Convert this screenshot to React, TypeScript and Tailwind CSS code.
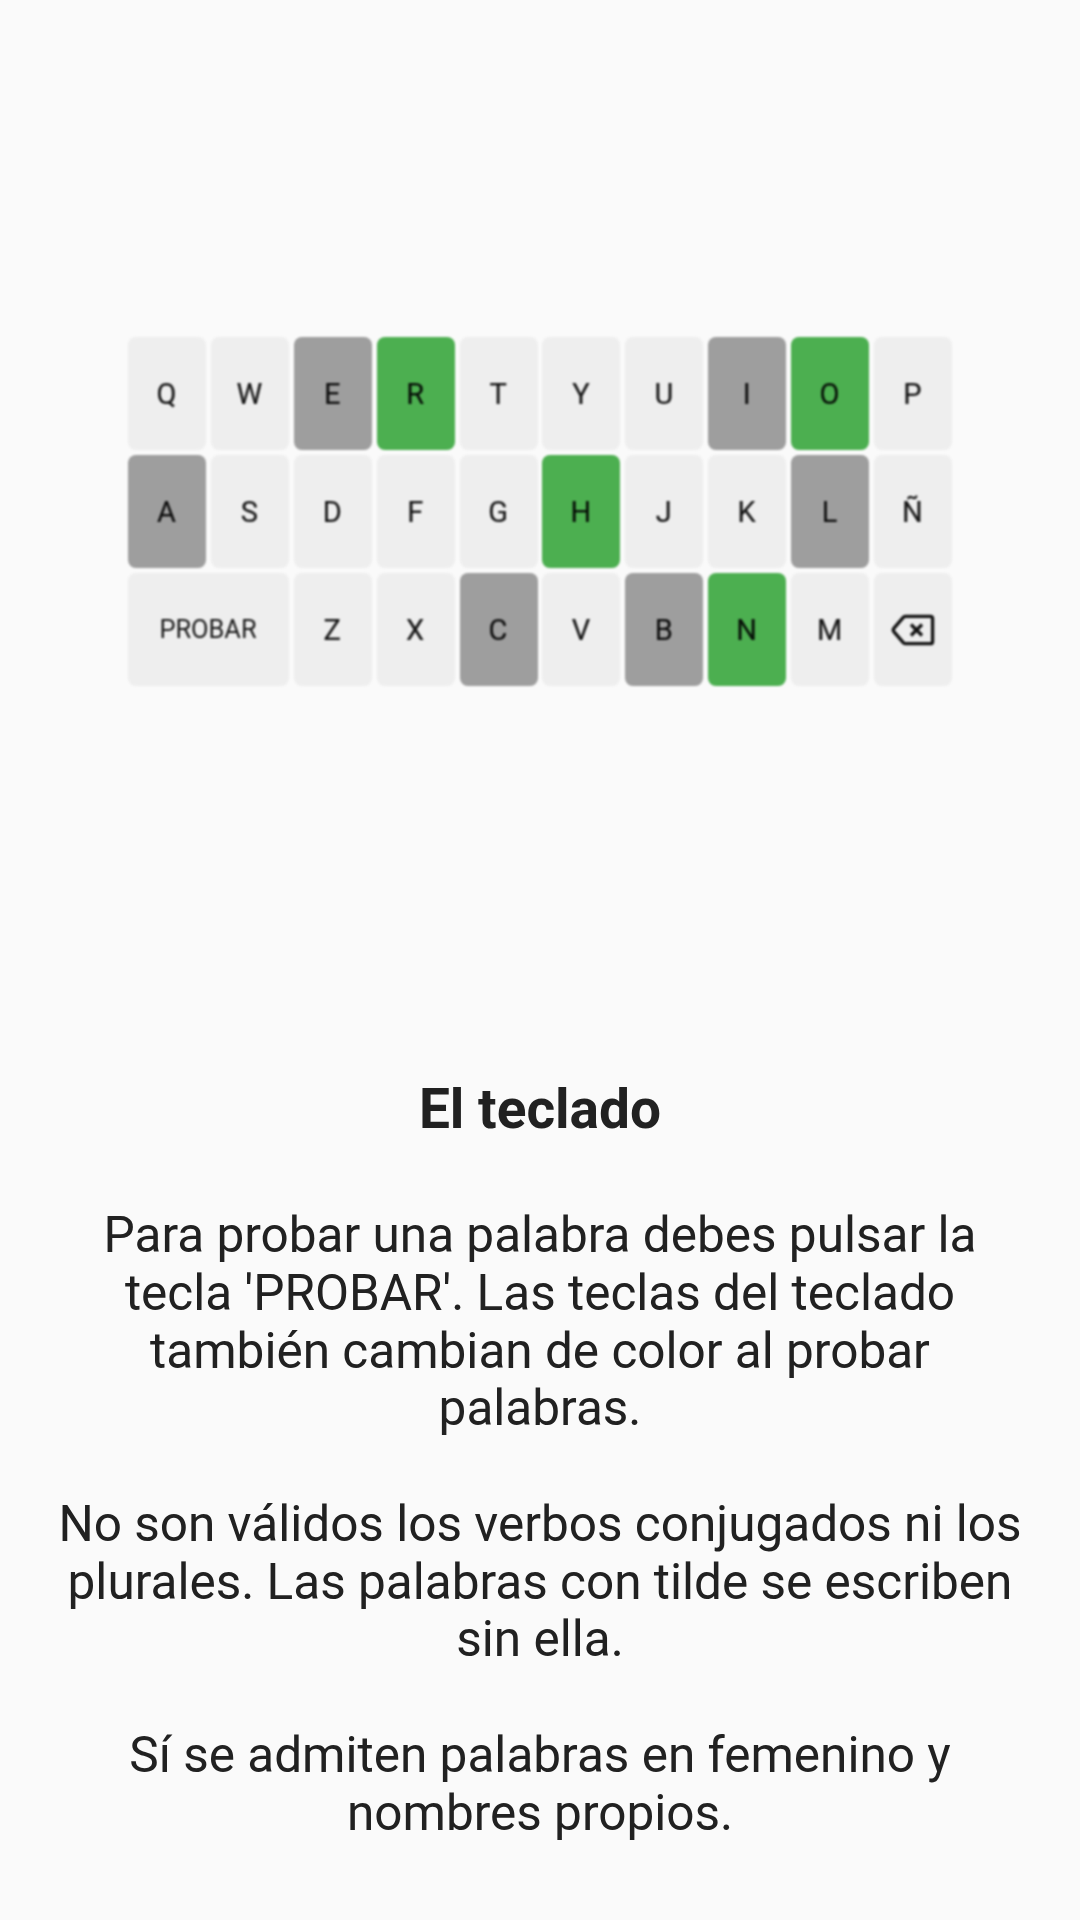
const states: Record<string, string> = {
  E: 'bg-[#9e9e9e]', I: 'bg-[#9e9e9e]', A: 'bg-[#9e9e9e]', L: 'bg-[#9e9e9e]', C: 'bg-[#9e9e9e]', B: 'bg-[#9e9e9e]',
  R: 'bg-[#4caf50]', O: 'bg-[#4caf50]', H: 'bg-[#4caf50]', N: 'bg-[#4caf50]',
};
const rows = [
  ['Q', 'W', 'E', 'R', 'T', 'Y', 'U', 'I', 'O', 'P'],
  ['A', 'S', 'D', 'F', 'G', 'H', 'J', 'K', 'L', 'Ñ'],
  ['PROBAR', 'Z', 'X', 'C', 'V', 'B', 'N', 'M', 'DEL'],
];

function Backspace() {
  return (
    <svg className="mb-[2px] ml-[1px]" width="44" height="32" viewBox="0 0 44 32" fill="none" stroke="#111111" strokeWidth="3.3" strokeLinejoin="round">
      <path d="M14.6 2.3H39.3Q41.6 2.3 41.6 4.6V27.4Q41.6 29.7 39.3 29.7H14.6Q13.4 29.7 12.5 28.8L2.8 17.6Q1.6 16 2.8 14.4L12.5 3.2Q13.4 2.3 14.6 2.3Z" />
      <path d="M20 10.5L31 21.5M31 10.5L20 21.5" />
    </svg>
  );
}

function Key({ label }: { label: string }) {
  const wide = label === 'PROBAR';
  return (
    <div
      className={`flex h-[113px] items-center justify-center rounded-[8px] text-black/90 ${
        wide ? 'col-span-2 pr-[1px] text-[25.4px]' : 'pr-[1px] pt-[2px] text-[29px] [-webkit-text-stroke:0.2px]'
      } ${states[label] ?? 'bg-[#eeeeee]'}`}
    >
      {label === 'DEL' ? <Backspace /> : label}
    </div>
  );
}

export default function App() {
  return (
    <main className="h-[1920px] w-[1080px] overflow-hidden bg-[#fafafa] pt-[337px] text-center font-['Roboto',sans-serif] text-[#212121]">
      <div className="mx-auto grid w-[824px] grid-cols-10 gap-x-[4.8px] gap-y-[5px] blur-[0.8px]">
        {rows.flat().map((k) => <Key key={k} label={k} />)}
      </div>
      <h1 className="mt-[391px] text-[55px] font-bold leading-[64px]">El teclado</h1>
      <div className="mt-[66px] flex flex-col gap-[57.75px] text-[49.5px] leading-[57.75px]">
        <p>Para probar una palabra debes pulsar la<br />tecla 'PROBAR'. Las teclas del teclado<br />también cambian de color al probar<br />palabras.</p>
        <p>No son válidos los verbos conjugados ni los<br />plurales. Las palabras con tilde se escriben<br />sin ella.</p>
        <p>Sí se admiten palabras en femenino y<br />nombres propios.</p>
      </div>
    </main>
  );
}
